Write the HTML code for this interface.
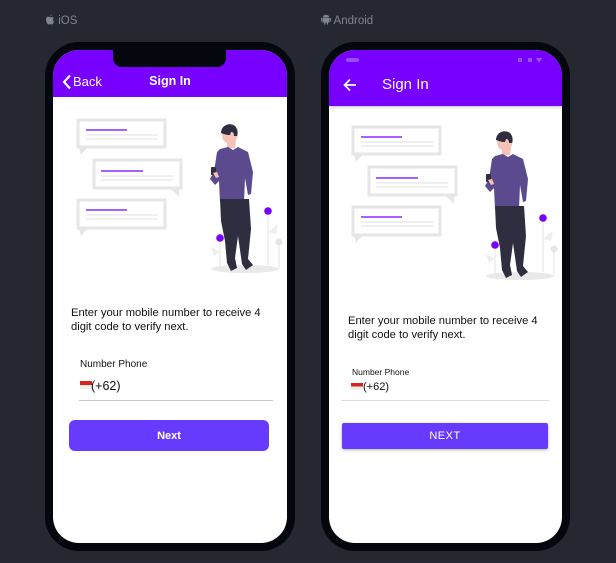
<!DOCTYPE html>
<html><head><meta charset="utf-8"><style>
*{margin:0;padding:0;box-sizing:border-box}
body{width:616px;height:563px;background:#252830;position:relative;overflow:hidden;font-family:"Liberation Sans",Arial,sans-serif}
.lbl{position:absolute;top:14px;color:#80848d;font-size:11.5px}
.frame{position:absolute;top:42px;width:250px;height:509px;background:#05070f;border-radius:34px}
.screen{position:absolute;top:8px;left:8px;right:8px;bottom:8px;background:#fff;border-radius:26px;overflow:hidden}
.abs{position:absolute}
</style></head><body>
<div class="lbl" style="left:45px"><svg width="10" height="11" viewBox="0 0 10 11" style="vertical-align:-1px"><path d="M7 0.5c-.8.1-1.6.6-1.9 1.4.8.1 1.6-.5 1.9-1.4zM5 3c-.6 0-1.2-.4-1.8-.4C2 2.600 1 3.600 1 5.400 1 7.500 2.400 10.500 3.600 10.500c.6 0 .9-.4 1.500-.4s.8.4 1.500.4C7.700 10.500 8.600 8.600 9 7.600 8 7.100 7.600 5.500 8.700 4.200 8.200 3.500 7.500 3 6.800 3 6.100 3 5.600 3.300 5 3.300z" fill="#80848d"/></svg> iOS</div>
<div class="lbl" style="left:321px"><svg width="10" height="11" viewBox="0 0 10 11" style="vertical-align:-1px"><path d="M1.500 4h7v4.500h-7zM1.800 3.500a3.200 2.800 0 0 1 6.400 0z M0 4h1v3.500H0zM9 4h1v3.500H9zM3 8h1.300v2.500H3zM5.700 8H7v2.500H5.700z" fill="#80848d"/></svg> Android</div>

<svg width="0" height="0" style="position:absolute"><defs>
<g id="ill">
<g fill="#fff" stroke="#e6e6e6" stroke-width="3">
<rect x="78" y="120" width="87" height="27"/><rect x="94" y="160" width="87" height="28"/><rect x="78" y="200" width="87" height="28"/></g>
<path d="M79 148h8l-6 7z M171 189h8v8z M79 229h8l-6 7z" fill="#e6e6e6"/>
<g stroke-width="1.2"><path d="M86 130h41M101 171h42M86 210h41" stroke="#7700ff"/>
<path d="M86 135h72M86 139h72M101 176h72M101 180h72M86 215h72M86 219h72" stroke="#e6e6e6"/></g>
<ellipse cx="245" cy="269" rx="34" ry="4" fill="#e9e9e9"/>
<path d="M268 215v50M220 240v28M279 244v24" stroke="#e6e6e6" stroke-width="1"/>
<path d="M268 232l10-8-2 10zM220 252l-9-5 3 9z" fill="#eee"/>
<circle cx="268" cy="211" r="3.800" fill="#7700ff"/><circle cx="220" cy="238" r="3.800" fill="#7700ff"/><circle cx="279" cy="242" r="3.500" fill="#e6e6e6"/>
<path d="M222 134c0-7 8-10 13-6 4 3 3 9 1 12l-1 8h-8l0-5c-3-1-5-4-5-9z" fill="#f6c2b8"/>
<path d="M221 133c0-8 9-11 14-7 3 3 3 7 2 10h-3c0-3-1-4-3-4l-1 3c-4 0-6-1-9-2z" fill="#2f2e41"/>
<path d="M220 149l8-2 5 3 5-3 10 5 5 20-2 22-3 1-3-17-1 24h-24l-1-21-4 4-5-6 4-7 3-20z" fill="#5c4a8f"/>
<rect x="211" y="167" width="5" height="8" rx="1" fill="#2f2e41"/>
<path d="M213 173l3 5 3-1-2-5z" fill="#f6c2b8"/>
<path d="M220 199h29l2 30-3 30 5 6-7 5-4-6-4-28-3 22 2 10-6 3-4-8-2-22-4-20z" fill="#2f2e41"/>
</g></defs></svg>

<div class="frame" style="left:45px">
 <div class="screen">
  <div class="abs" style="left:0;top:0;width:234px;height:47px;background:#7700ff"></div>
  <div class="abs" style="left:60px;top:0;width:113px;height:17px;background:#05070f;border-radius:0 0 9px 9px"></div>
  <svg class="abs" style="left:9px;top:24px" width="10" height="16" viewBox="0 0 10 16"><path d="M8 1.500L2 8l6 6.500" stroke="#fff" stroke-width="2.200" fill="none"/></svg>
  <div class="abs" style="left:20px;top:24px;color:#fff;font-size:13px">Back</div>
  <div class="abs" style="left:0;width:234px;text-align:center;top:24px;color:#fff;font-size:12.5px;font-weight:bold">Sign In</div>
  <svg class="abs" style="left:-53px;top:-50px" width="300" height="300"><use href="#ill"/></svg>
  <div class="abs" style="left:18px;top:256px;font-size:11.2px;line-height:14px;color:#111;width:210px">Enter your mobile number to receive 4 digit code to verify next.</div>
  <div class="abs" style="left:27px;top:309px;font-size:10px;color:#111">Number Phone</div>
  <div class="abs" style="left:27px;top:331px;width:12px;height:8px;background:linear-gradient(#d6241b 50%,#eee 50%)"></div>
  <div class="abs" style="left:38px;top:329px;font-size:12.5px;color:#111">(+62)</div>
  <div class="abs" style="left:26px;top:350px;width:194px;height:1px;background:#c8c8cc"></div>
  <div class="abs" style="left:16px;top:370px;width:200px;height:31px;background:#673bfd;border-radius:6px;color:#fff;font-size:11px;font-weight:bold;text-align:center;line-height:32px">Next</div>
 </div>
</div>

<div class="frame" style="left:321px;width:249px">
 <div class="screen">
  <div class="abs" style="left:0;top:0;width:233px;height:56px;background:#7700ff;box-shadow:0 1px 3px rgba(0,0,0,.25)"></div>
  <div class="abs" style="left:17px;top:8px;width:13px;height:4px;border-radius:2px;background:#9a4dff"></div>
  <div class="abs" style="left:189px;top:8px;width:4px;height:4px;background:#9a4dff"></div>
  <div class="abs" style="left:199px;top:8px;width:4px;height:4px;background:#9a4dff"></div>
  <div class="abs" style="left:207px;top:8px;width:0;height:0;border-left:3px solid transparent;border-right:3px solid transparent;border-top:5px solid #9a4dff"></div>
  <svg class="abs" style="left:14px;top:28px" width="14" height="14" viewBox="0 0 14 14"><path d="M13 7H2M7 1.500L1.500 7 7 12.500" stroke="#fff" stroke-width="1.700" fill="none"/></svg>
  <div class="abs" style="left:53px;top:26px;color:#fff;font-size:15px;font-weight:500">Sign In</div>
  <svg class="abs" style="left:-54px;top:-43px" width="300" height="300"><use href="#ill"/></svg>
  <div class="abs" style="left:19px;top:264px;font-size:11.2px;line-height:14px;color:#111;width:210px">Enter your mobile number to receive 4 digit code to verify next.</div>
  <div class="abs" style="left:23px;top:317px;font-size:8.5px;color:#111">Number Phone</div>
  <div class="abs" style="left:22px;top:333px;width:12px;height:7px;background:linear-gradient(#d6241b 50%,#eee 50%)"></div>
  <div class="abs" style="left:34px;top:331px;font-size:11px;color:#111">(+62)</div>
  <div class="abs" style="left:12px;top:350px;width:208px;height:1px;background:#ddd"></div>
  <div class="abs" style="left:13px;top:373px;width:206px;height:26px;background:#673bfd;border-radius:2px;box-shadow:0 1px 3px rgba(0,0,0,.3);color:#fff;font-size:11px;font-weight:500;letter-spacing:.5px;text-align:center;line-height:26px">NEXT</div>
 </div>
</div>
</body></html>
